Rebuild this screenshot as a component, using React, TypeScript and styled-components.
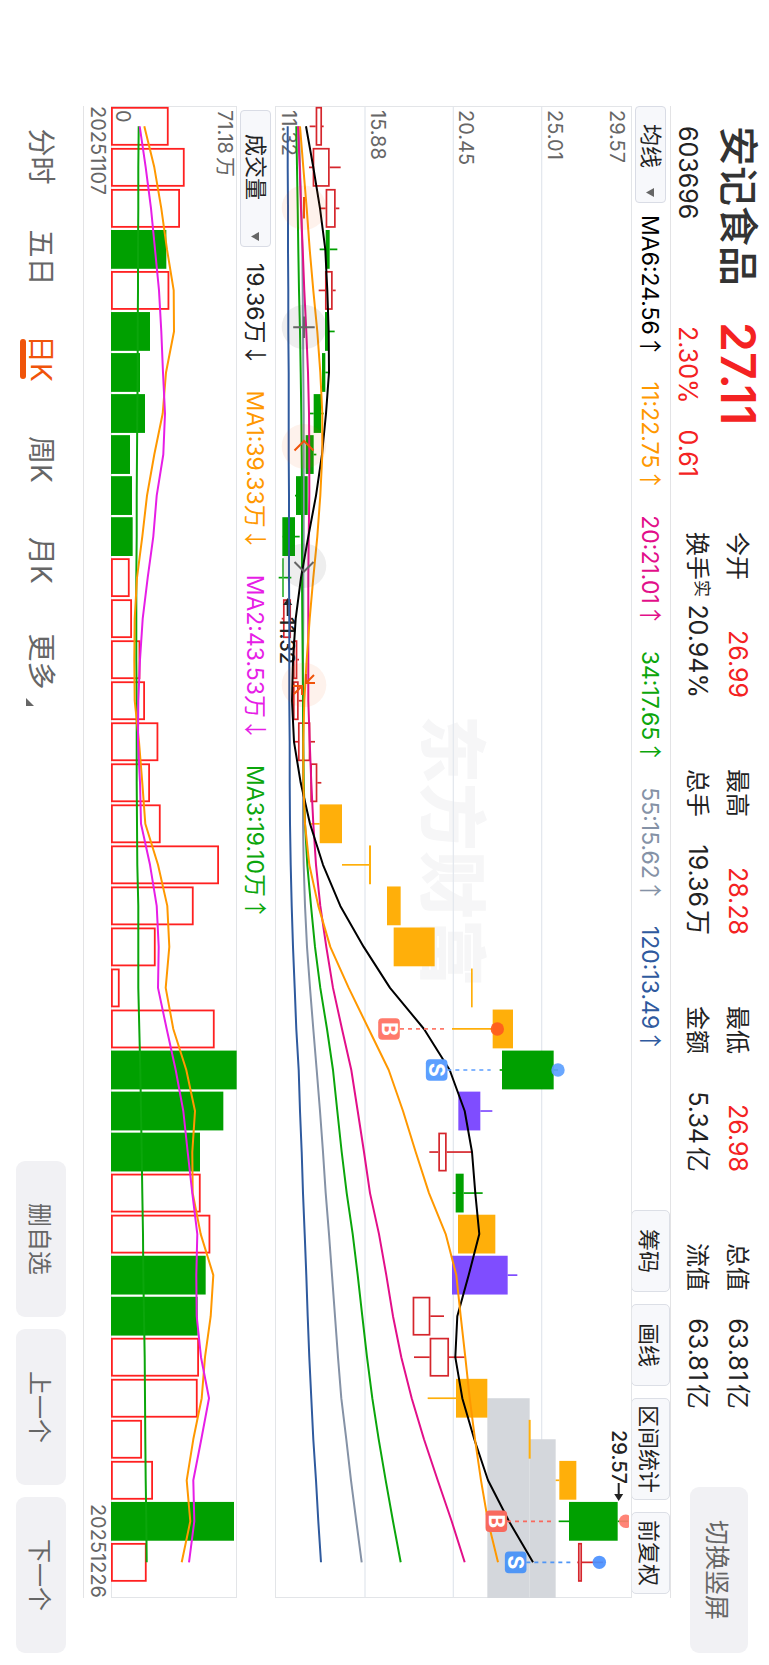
import React from "react";
import styled, { createGlobalStyle } from "styled-components";

const GlobalStyle = createGlobalStyle`
  * { box-sizing: border-box; }
  html, body { margin: 0; background: #fff; }
  body, button, select {
    font-family: Inter, "Noto Sans CJK SC", sans-serif;
    color: #333;
  }
  button, select { margin: 0; padding: 0; cursor: pointer; }
`;

const RED = "#f42222";
const GREEN = "#00a000";
const CANDLE_RED = "#d5262c";
const ORANGE = "#ffaf0a";
const PURPLE = "#7f4dff";

/* ---------- page frame ---------- */

const Viewport = styled.div`
  width: 100%;
  height: 100vh;
  overflow: hidden;
`;

/* The screen is held in landscape: its width runs down the window. */
const Landscape = styled.main`
  display: flex;
  flex-direction: column;
  width: 100vh;
  height: 100vw;
  transform-origin: top left;
  transform: translateX(100vw) rotate(90deg);
  background: #fff;
`;

const ChartColumn = styled.section`
  display: flex;
  flex-direction: column;
  margin: 0 67px 0 106px;
`;

/* ---------- header ---------- */

const Header = styled.header`
  display: flex;
  align-items: flex-start;
  height: 98px;
  padding: 0 12px 0 126px;
`;

const Quote = styled.div`
  display: grid;
  grid-template-columns: 196px 1fr;
  grid-template-rows: 62px 38px;
  flex: none;
  width: 406px;
  align-items: center;
`;

const StockName = styled.h1`
  margin: 0;
  font-size: 40px;
  line-height: 62px;
  font-weight: 500;
`;

const Price = styled.strong`
  font-size: 48px;
  line-height: 62px;
  font-weight: 600;
  color: ${RED};
`;

const Code = styled.span`
  font-size: 25px;
  line-height: 38px;
  color: #222;
`;

const Change = styled.span`
  display: flex;
  gap: 26px;
  padding-left: 4px;
  font-size: 25px;
  line-height: 38px;
  color: ${RED};
`;

const Stats = styled.dl`
  display: grid;
  grid-template-columns: repeat(4, 166px);
  grid-template-rows: 40px 40px;
  column-gap: 71px;
  margin: 11px 0 0;
`;

const Stat = styled.div`
  display: flex;
  justify-content: space-between;
  align-items: center;
  white-space: nowrap;
  line-height: 40px;
`;

const StatLabel = styled.dt`
  padding-top: 2px;
  font-size: 24px;
  line-height: 38px;
  color: #222;
`;

const StatNote = styled.sup`
  font-size: 17px;
  line-height: 0;
  vertical-align: 7px;
`;

const StatValue = styled.dd<{ $up?: boolean }>`
  display: flex;
  gap: 3px;
  margin: 0;
  font-size: 25px;
  color: ${(p) => (p.$up ? RED : "#222")};
`;

const SoftButton = styled.button<{ $large?: boolean }>`
  flex: none;
  width: ${(p) => (p.$large ? 166 : 156)}px;
  height: ${(p) => (p.$large ? 58 : 50)}px;
  border: 0;
  border-radius: 9px;
  background: #f1f1f4;
  color: #666;
  font-size: ${(p) => (p.$large ? 25 : 24)}px;
`;

const HeaderAction = styled.div`
  margin: 21px 0 0 auto;
`;

/* ---------- indicator bars ---------- */

const Bar = styled.div<{ $inset?: boolean }>`
  display: flex;
  align-items: center;
  height: ${(p) => (p.$inset ? 38 : 39)}px;
  padding: 0 4px 0 ${(p) => (p.$inset ? 4 : 0)}px;
  border-top: ${(p) => (p.$inset ? "0" : "1px solid #e3e3e5")};
`;

const Picker = styled.label<{ $wide?: boolean }>`
  position: relative;
  flex: none;
  width: ${(p) => (p.$wide ? 137 : 97)}px;
  height: 31px;
  margin-right: ${(p) => (p.$wide ? 16 : 12)}px;

  select {
    appearance: none;
    width: 100%;
    height: 31px;
    padding-left: ${(p) => (p.$wide ? 23 : 17)}px;
    border: 1px solid #d9dce5;
    border-radius: 4px;
    background: #f7f8fb;
    color: #222;
    font-size: 22px;
    line-height: 28px;
  }

  svg {
    position: absolute;
    right: 6px;
    top: 12px;
    pointer-events: none;
  }
`;

const Readings = styled.div`
  display: flex;
  gap: 24px;
`;

const Reading = styled.span<{ $color: string }>`
  font-size: 23px;
  line-height: 36px;
  white-space: nowrap;
  color: ${(p) => p.$color};
`;

const Trend = styled.span`
  font-family: "Noto Sans CJK SC", sans-serif;
`;

const Tools = styled.div`
  display: flex;
  gap: 12px;
  margin-left: auto;
`;

const ToolButton = styled.button<{ $wide?: boolean }>`
  width: ${(p) => (p.$wide ? 102 : 82)}px;
  height: 39px;
  border: 1px solid #dcdfe6;
  border-radius: 5px;
  background: #f7f8fb;
  color: #222;
  font-size: 22px;
  white-space: nowrap;
`;

/* ---------- charts ---------- */

const Chart = styled.svg`
  display: block;
  width: 100%;
  height: auto;
  font-family: Inter, "Noto Sans CJK SC", sans-serif;
`;

const Dates = styled.div`
  display: flex;
  justify-content: space-between;
  height: 28px;
  border-bottom: 1px solid #e3e3e5;
  font-size: 20px;
  line-height: 27px;
  color: #666;
`;

/* ---------- footer ---------- */

const Footer = styled.footer`
  display: flex;
  flex: 1;
  align-items: center;
  justify-content: space-between;
  padding: 0 12px 0 106px;
`;

const Tabs = styled.nav`
  display: grid;
  grid-template-columns: repeat(6, 101px);
`;

const Tab = styled.button<{ $active?: boolean }>`
  display: flex;
  flex-direction: column;
  align-items: center;
  padding-top: 6px;
  border: 0;
  background: none;
  font-size: 28px;
  line-height: 30px;
  white-space: nowrap;
  color: ${(p) => (p.$active ? "#f0540a" : "#666")};

  &::after {
    content: "";
    width: 40px;
    height: 6px;
    border-radius: 3px;
    background: ${(p) => (p.$active ? "#f0540a" : "transparent")};
  }
`;

const TabText = styled.span`
  display: flex;
  align-items: flex-end;
  gap: 8px;

  svg { margin-right: -16px; }
`;

const Actions = styled.div`
  display: flex;
  gap: 12px;
`;

/* ---------- data: levels are thirds of a pixel above the plot's floor ---------- */

const STEP = 41.03;
const cx = (i: number) => 20.3 + STEP * i;
const HEIGHT = 357;
const FLOOR = 16;
const py = (v: number) => HEIGHT - (v - FLOOR) / 3;
const VHEIGHT = 126;
const vy = (v: number) => VHEIGHT - (v - 333) / 3;

type Kind = "r" | "g" | "o" | "p";
type Candle = [Kind, number, number, number, number];

const candles: Candle[] = [
  ["r", 120, 138, 157, 162], ["r", 118, 129, 180, 213], ["r", 152, 168, 198, 209],
  ["g", 150, 168, 180, 203], ["r", 147, 166, 189, 198], ["g", 166, 166, 178, 195],
  ["g", 157, 157, 167, 176], ["g", 119, 132, 154, 162], ["g", 108, 108, 132, 140],
  ["g", 76, 79, 114, 114], ["g", 37, 38, 76, 90], ["g", 27, 38, 42, 65],
  ["r", 36, 40, 64, 70], ["r", 70, 70, 83, 88], ["r", 70, 70, 87, 104],
  ["r", 76, 85, 122, 136], ["r", 121, 122, 143, 155], ["o", 123, 150, 217, 217],
  ["o", 217, 298, 304, 304], ["o", 352, 352, 393, 393], ["o", 372, 372, 495, 495],
  ["o", 604, 604, 609, 609], ["o", 547, 669, 730, 730], ["g", 690, 697, 852, 865],
  ["p", 566, 566, 632, 668], ["r", 479, 506, 531, 607], ["g", 549, 558, 582, 639],
  ["o", 565, 565, 677, 677], ["p", 547, 547, 714, 743], ["r", 429, 429, 482, 523],
  ["r", 433, 480, 538, 585], ["o", 474, 559, 653, 653], ["o", 777, 777, 783, 783],
  ["o", 858, 869, 920, 920], ["g", 867, 898, 1044, 1076], ["r", 923, 925, 937, 1000],
];

const kindColor: Record<Kind, string> = { r: CANDLE_RED, g: GREEN, o: ORANGE, p: PURPLE };

const averages: { color: string; points: number[] }[] = [
  { color: "#2f5a9e", points: [54, 54, 55, 55, 56, 56, 57, 57, 57, 58, 58, 58, 59, 59, 59, 60, 60, 61, 63, 66, 70, 75, 80, 87, 91, 96, 100, 105, 110, 114, 119, 125, 131, 139, 146, 154] },
  { color: "#8592a6", points: [88, 91, 95, 98, 99, 100, 101, 102, 102, 102, 102, 101, 101, 100, 100, 100, 100, 100, 102, 106, 112, 121, 131, 141, 151, 160, 168, 178, 187, 196, 205, 215, 230, 244, 260, 276] },
  { color: "#0ba60b", points: [80, 82, 84, 86, 88, 91, 93, 95, 96, 97, 97, 97, 98, 99, 100, 101, 102, 106, 113, 124, 136, 152, 172, 190, 203, 216, 231, 249, 264, 278, 292, 308, 327, 348, 370, 393] },
  { color: "#e20f8a", points: [85, 90, 94, 99, 104, 110, 115, 118, 119, 119, 117, 116, 116, 116, 116, 120, 125, 131, 139, 152, 170, 190, 217, 245, 264, 283, 301, 328, 350, 370, 395, 426, 463, 504, 546, 585] },
  { color: "#000", points: [109, 131, 151, 167, 173, 177, 178, 169, 157, 139, 116, 94, 78, 70, 67, 73, 93, 121, 160, 212, 282, 361, 463, 540, 585, 607, 617, 629, 597, 563, 557, 578, 614, 655, 718, 790] },
  { color: "#ff9800", points: [91, 101, 111, 120, 131, 143, 152, 158, 158, 152, 143, 131, 120, 111, 104, 101, 101, 106, 119, 146, 182, 237, 297, 357, 400, 438, 478, 528, 560, 573, 587, 600, 616, 634, 655, 685] },
];

const volumes = [
  506, 554, 540, 499, 508, 450, 420, 435, 390, 396, 398, 389, 396, 421, 435, 475, 450, 482,
  657, 581, 467, 359, 644, 710, 670, 600, 602, 631, 617, 593, 597, 593, 426, 459, 702, 440,
];
const falling = new Set([3, 5, 6, 7, 8, 9, 10, 23, 24, 25, 28, 29, 34]);

const volumeAverages: { color: string; points: number[] }[] = [
  { color: "#0ba60b", points: [416, 415, 415, 414, 414, 413, 413, 412, 411, 410, 410, 409, 409, 409, 410, 410, 410, 411, 412, 415, 415, 415, 418, 421, 423, 425, 427, 429, 430, 432, 434, 435, 436, 437, 439, 440] },
  { color: "#ff9800", points: [433, 463, 484, 501, 521, 522, 498, 488, 463, 441, 427, 411, 404, 403, 404, 417, 427, 436, 474, 502, 508, 497, 520, 559, 585, 577, 578, 602, 640, 632, 615, 605, 580, 560, 571, 545] },
  { color: "#e61ee6", points: [419, 437, 453, 465, 477, 484, 489, 495, 490, 470, 460, 443, 428, 420, 415, 414, 420, 423, 450, 470, 476, 474, 500, 527, 550, 563, 577, 592, 589, 590, 603, 627, 604, 580, 583, 567] },
];

const trace = (points: number[], y: (v: number) => number) =>
  points.map((v, i) => `${cx(i).toFixed(1)},${y(v).toFixed(1)}`).join(" ");

const trades = [
  { i: 22, side: "B", box: 358, from: 391, to: 524, dot: 683, tag: "#ff7a6b", pin: "#ff5a1e" },
  { i: 23, side: "S", box: 501, from: 533, to: 663, dot: 865, tag: "#5c9fff", pin: "#5c9fff" },
  { i: 34, side: "B", box: 680, from: 712, to: 845, dot: 1068, tag: "#f8695d", pin: "#ff7a6b" },
  { i: 35, side: "S", box: 738, from: 770, to: 903, dot: 989, tag: "#4f96f6", pin: "#4a90ff" },
];

const priceLabels: [string, number][] = [
  ["29.57", 1021], ["25.01", 835], ["20.45", 568], ["15.88", 303], ["11.32", 37],
];

const GestureHints = () => (
  <g fill="none" strokeWidth="2">
    {[101.7, 221, 340.3, 459.7, 579].map((x, i) => (
      <circle key={x} cx={x} cy={328} r={22.3} fill={i % 2 ? "#555" : "#f0540a"} fillOpacity={i % 2 ? 0.1 : 0.08} />
    ))}
    <g stroke="#f0540a">
      <path d="M91 328h21.5" />
      <path d="M344.5 318.5l-9.500 9.500 9.500 9.500" />
      <path d="M568 326h9v-9M577 326l-8-8M589 330h-9v9M580 330l8 8" />
    </g>
    <g stroke="#666">
      <path d="M210.500 328h21.500M221.200 317.300v21.500" />
      <path d="M456 318.500l9.500 9.500-9.500 9.500" />
    </g>
  </g>
);

const PriceChart = () => (
  <Chart viewBox="0 0 1492 357" role="img" aria-label="日K">
    <defs>
      <clipPath id="plot">
        <rect x="0" y="3" width="1492" height="354" />
      </clipPath>
    </defs>
    <g fill="#f6f6f7">
      <text x="609" y="205" fontSize="68" fontWeight="900">东方财富</text>
    </g>
    <g stroke="#e4e8ee" strokeWidth="1.300">
      {[286, 551, 816].map((v) => (
        <line key={v} x1="0" x2="1492" y1={py(v)} y2={py(v)} />
      ))}
    </g>
    <rect x="0.500" y="0.500" width="1491" height="356" fill="none" stroke="#e3e5e8" />
    <g fill="#d4d7dc">
      <rect x={cx(31)} y={py(780)} width={1492 - cx(31)} height={127 / 3} />
      <rect x={cx(32)} y={py(858)} width={1492 - cx(32)} height={78 / 3} />
    </g>
    <g fontSize="20" fill="#666">
      {priceLabels.map(([t, v]) => (
        <text key={t} x="4" y={py(v)}>{t}</text>
      ))}
    </g>
    {candles.map(([kind, low, a, b, high], i) => {
      const color = kindColor[kind];
      const hollow = kind === "r";
      const pad = hollow ? 0.8 : 0;
      return (
        <g key={i} stroke={color} strokeWidth="1.700">
          {low < a && <line x1={cx(i)} x2={cx(i)} y1={py(low)} y2={py(a)} />}
          {high > b && <line x1={cx(i)} x2={cx(i)} y1={py(b)} y2={py(high)} />}
          <rect
            x={cx(i) - 19.4 + pad}
            y={py(b) + pad}
            width={38.8 - 2 * pad}
            height={(b - a) / 3 - 2 * pad}
            fill={hollow ? "none" : color}
            stroke={hollow ? color : "none"}
          />
        </g>
      );
    })}
    <g fontSize="20" fontWeight="500" fill="#222">
      <text x="1324" y={py(1026)}>29.57</text>
      <path d="M1377 12.300h11v-3.500l7 4.500-7 4.500v-3.500h-11z" />
      <text x="511" y={py(30)}>11.32</text>
      <path d="M510 343.300h-11v-3.500l-7 4.500 7 4.500v-3.500h11z" />
    </g>
    {averages.map((a) => (
      <polyline key={a.color} points={trace(a.points, py)} fill="none" stroke={a.color} strokeWidth="2" strokeLinejoin="round" />
    ))}
    <GestureHints />
    {trades.map((t) => (
      <g key={t.i} clipPath="url(#plot)">
        <line x1={cx(t.i)} x2={cx(t.i)} y1={py(t.from)} y2={py(t.to)} stroke={t.tag} strokeWidth="1.700" strokeDasharray="4 4" />
        <circle cx={cx(t.i)} cy={py(t.dot)} r="6.700" fill={t.pin} fillOpacity="0.920" />
        <rect x={cx(t.i) - 10.8} y={py(t.box) - 10.8} width="21.600" height="21.600" rx="4" fill={t.tag} />
        <text x={cx(t.i)} y={py(t.box) + 7.5} textAnchor="middle" fontSize="21" fontWeight="700" fill="#fff">{t.side}</text>
      </g>
    ))}
  </Chart>
);

const VolumeChart = () => (
  <Chart viewBox="0 0 1492 126" role="img" aria-label="成交量">
    <rect x="0.500" y="0.500" width="1491" height="125" fill="none" stroke="#e3e5e8" />
    {volumes.map((v, i) => {
      const down = falling.has(i);
      const pad = down ? 0 : 0.9;
      return (
        <rect
          key={i}
          x={cx(i) - 19.4 + pad}
          y={vy(v) + pad}
          width={38.8 - 2 * pad}
          height={(v - 333) / 3 - 2 * pad}
          fill={down ? GREEN : "none"}
          stroke={down ? "none" : "#ff2020"}
          strokeWidth="1.800"
        />
      );
    })}
    <g fontSize="20" fill="#666">
      <text x="4" y={vy(653)}>71.18<tspan dx="3">万</tspan></text>
      <text x="4" y={vy(348)}>0</text>
    </g>
    {volumeAverages.map((a) => (
      <polyline key={a.color} points={trace(a.points, vy)} fill="none" stroke={a.color} strokeWidth="2" strokeLinejoin="round" />
    ))}
  </Chart>
);

const Caret = () => (
  <svg width="9" height="8" viewBox="0 0 9 8" aria-hidden="true">
    <path d="M0 0h9L4.500 8z" fill="#666" />
  </svg>
);

const priceReadings: [string, string][] = [
  ["MA6:24.56", "#000"], ["11:22.75", "#ff9800"], ["20:21.01", "#e20f8a"],
  ["34:17.65", "#0ba60b"], ["55:15.62", "#8592a6"], ["120:13.49", "#2f5a9e"],
];

const volumeReadings: [string, string, string][] = [
  ["19.36万", "↓", "#222"], ["MA1:39.33万", "↓", "#ff9800"],
  ["MA2:43.53万", "↓", "#e61ee6"], ["MA3:19.10万", "↑", "#0ba60b"],
];

const stats: { label: string; value: string; unit?: string; up?: boolean; note?: string }[] = [
  { label: "今开", value: "26.99", up: true },
  { label: "最高", value: "28.28", up: true },
  { label: "最低", value: "26.98", up: true },
  { label: "总值", value: "63.81", unit: "亿" },
  { label: "换手", value: "20.94%", note: "实" },
  { label: "总手", value: "19.36", unit: "万" },
  { label: "金额", value: "5.34", unit: "亿" },
  { label: "流值", value: "63.81", unit: "亿" },
];

const tabs = ["分时", "五日", "日K", "周K", "月K", "更多"];

export default function App() {
  return (
    <Viewport>
      <GlobalStyle />
      <Landscape>
        <Header>
          <Quote>
            <StockName>安记食品</StockName>
            <Price>27.11</Price>
            <Code>603696</Code>
            <Change><span>2.30%</span><span>0.61</span></Change>
          </Quote>
          <Stats>
            {stats.map((s) => (
              <Stat key={s.label}>
                <StatLabel>{s.label}{s.note && <StatNote>{s.note}</StatNote>}</StatLabel>
                <StatValue $up={s.up}>{s.value}{s.unit && <span>{s.unit}</span>}</StatValue>
              </Stat>
            ))}
          </Stats>
          <HeaderAction>
            <SoftButton type="button" $large>切换竖屏</SoftButton>
          </HeaderAction>
        </Header>

        <ChartColumn>
          <Bar>
            <Picker>
              <select aria-label="主图指标"><option>均线</option></select>
              <Caret />
            </Picker>
            <Readings>
              {priceReadings.map(([text, color]) => (
                <Reading key={text} $color={color}>{text}<Trend>↑</Trend></Reading>
              ))}
            </Readings>
            <Tools>
              <ToolButton type="button">筹码</ToolButton>
              <ToolButton type="button">画线</ToolButton>
              <ToolButton type="button" $wide>区间统计</ToolButton>
              <ToolButton type="button">前复权</ToolButton>
            </Tools>
          </Bar>
          <PriceChart />
          <Bar $inset>
            <Picker $wide>
              <select aria-label="副图指标"><option>成交量</option></select>
              <Caret />
            </Picker>
            <Readings>
              {volumeReadings.map(([text, arrow, color]) => (
                <Reading key={text} $color={color}>{text}<Trend>{arrow}</Trend></Reading>
              ))}
            </Readings>
          </Bar>
          <VolumeChart />
          <Dates><span>20251107</span><span>20251226</span></Dates>
        </ChartColumn>

        <Footer>
          <Tabs>
            {tabs.map((t) => (
              <Tab key={t} type="button" $active={t === "日K"}>
                <TabText>
                  {t}
                  {t === "更多" && (
                    <svg width="8" height="8" viewBox="0 0 8 8" aria-hidden="true">
                      <path d="M8 0v8H0z" fill="#666" />
                    </svg>
                  )}
                </TabText>
              </Tab>
            ))}
          </Tabs>
          <Actions>
            <SoftButton type="button">删自选</SoftButton>
            <SoftButton type="button">上一个</SoftButton>
            <SoftButton type="button">下一个</SoftButton>
          </Actions>
        </Footer>
      </Landscape>
    </Viewport>
  );
}
